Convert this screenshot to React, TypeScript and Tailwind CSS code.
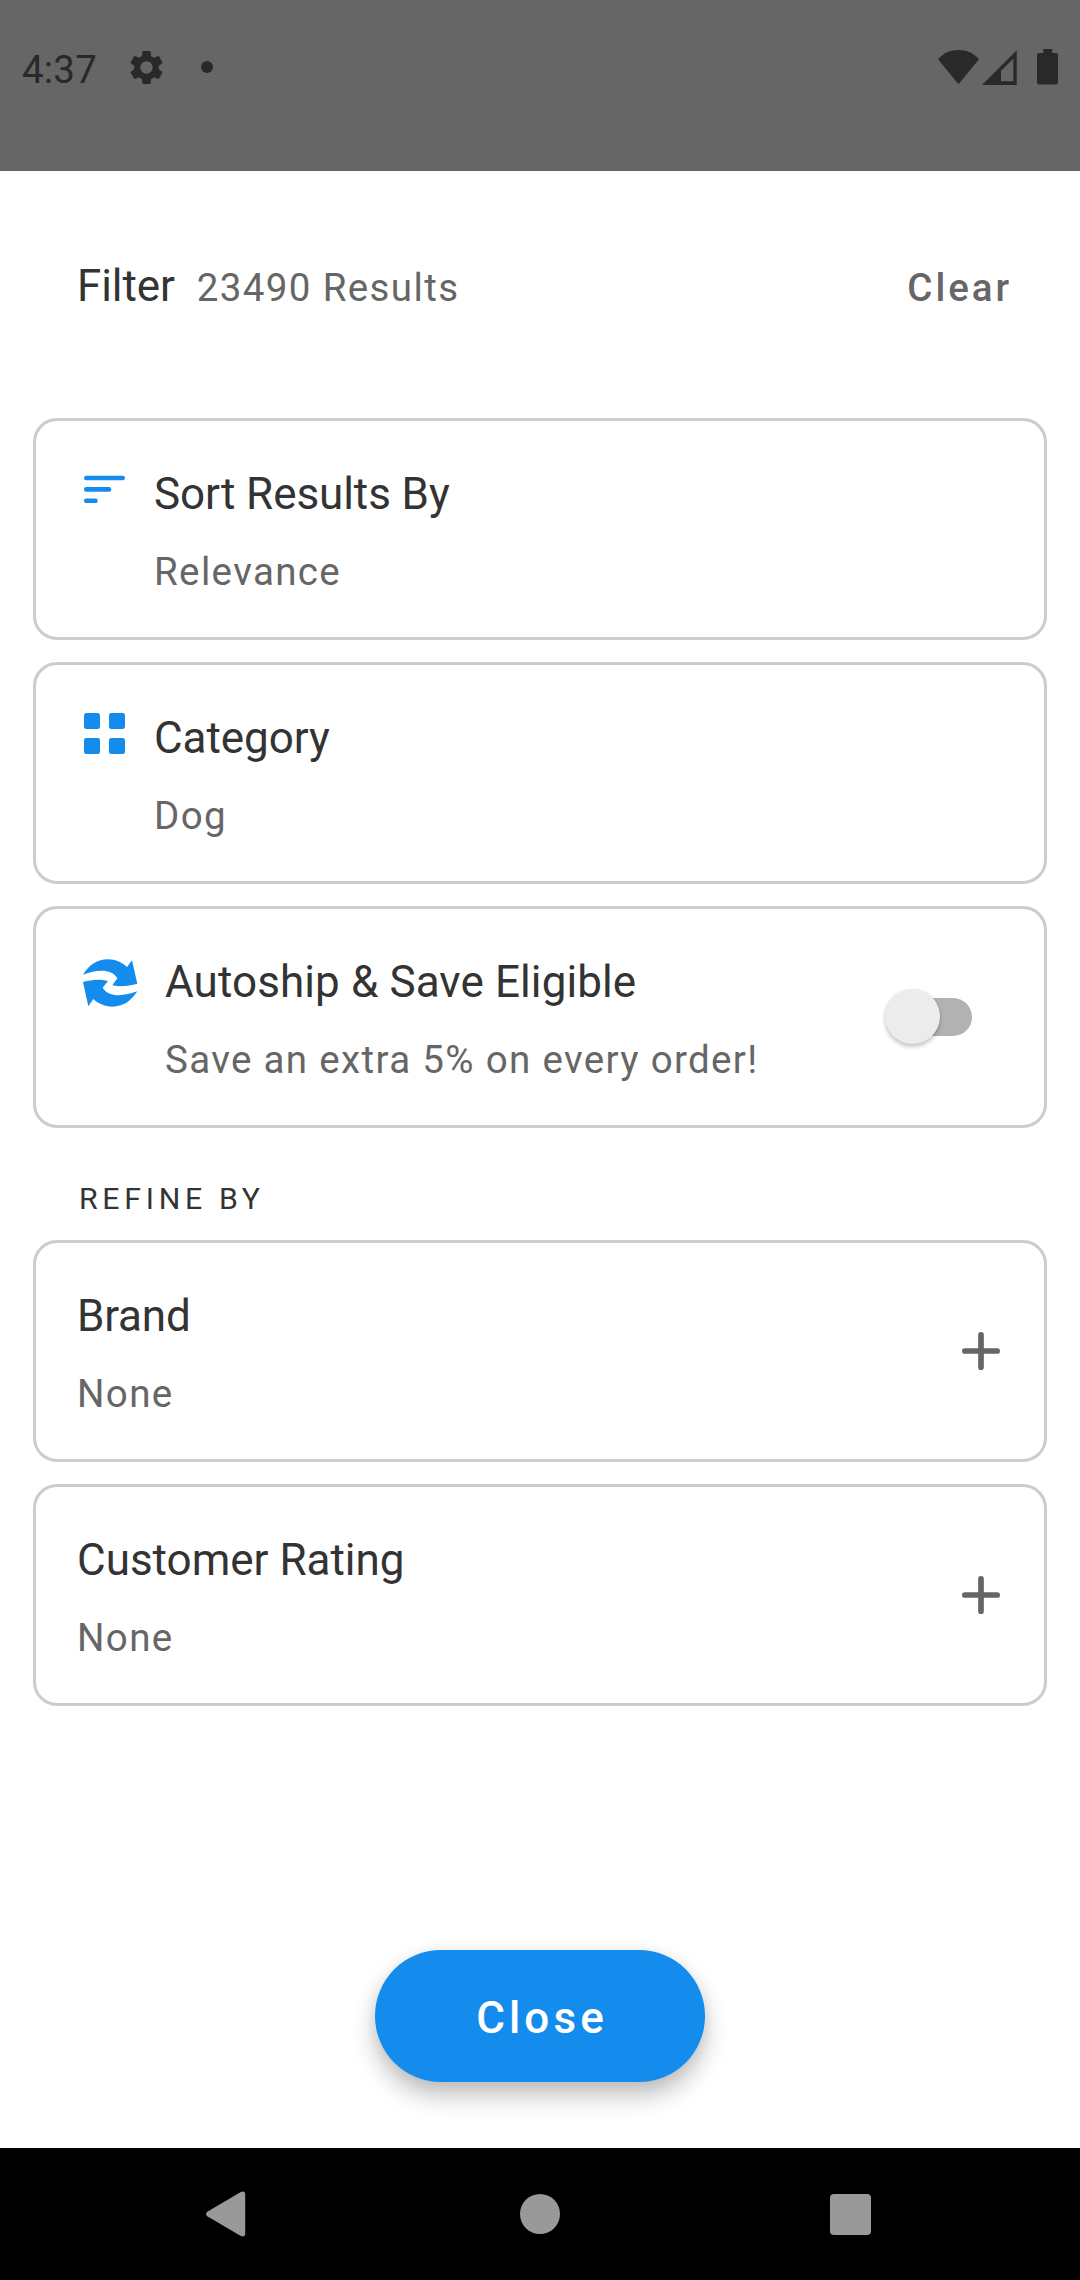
import React from 'react';
import { MdSettings } from 'react-icons/md';

function StatusBar() {
  return (
    <header className="flex h-[171px] items-start bg-[#666666] pt-[47px] pl-[22px] pr-[22px] text-[#292929]">
      <span className="w-[104px] text-[38.5px] leading-[45px] tracking-[0.2px]">4:37</span>
      <MdSettings className="h-[41px] w-[41px]" />
      <svg className="ml-[34px] h-[41px] w-3" viewBox="0 0 12 41">
        <circle cx="6" cy="20" r="6" fill="currentColor" />
      </svg>
      <div className="ml-auto flex">
        <svg className="h-[41px] w-[41px]" viewBox="0 0 41 41" fill="currentColor">
          <path d="M0 12.3C5.5 6 12.5 3 20.5 3S35.500 6 41 12.300L20.500 37.200Z" />
        </svg>
        <svg className="ml-[3px] h-[41px] w-[35px]" viewBox="0 0 35 41" fill="currentColor">
          <path fillRule="evenodd" d="M0 38L34.700 3.300V38ZM19 23.800V34.200H31.300V11.800Z" />
        </svg>
        <svg className="ml-5 h-[41px] w-[21px]" viewBox="0 0 21 41" fill="currentColor">
          <path d="M6.300 2H15.200V6H19a2 2 0 0 1 2 2V35.500a2 2 0 0 1-2 2H2a2 2 0 0 1-2-2V8a2 2 0 0 1 2-2H6.300Z" />
        </svg>
      </div>
    </header>
  );
}

function SortIcon() {
  return (
    <svg className="mr-[22px] h-[52px] w-[55px] shrink-0" viewBox="0 0 55 52" fill="#148cee">
      <rect x="7" y="7.700" width="41" height="4.600" rx="2.200" />
      <rect x="7" y="19.100" width="27.300" height="4.600" rx="2.200" />
      <rect x="7" y="30.500" width="13.700" height="4.600" rx="2.200" />
    </svg>
  );
}

function CategoryIcon() {
  return (
    <svg className="mr-[22px] h-[52px] w-[55px] shrink-0" viewBox="0 0 55 52" fill="#148cee">
      <rect x="7" y="1" width="16" height="16" rx="2.300" />
      <rect x="32" y="1" width="16" height="16" rx="2.300" />
      <rect x="7" y="26" width="16" height="16" rx="2.300" />
      <rect x="32" y="26" width="16" height="16" rx="2.300" />
    </svg>
  );
}

function AutoshipIcon() {
  return (
    <svg className="mr-[22px] h-[52px] w-[66px] shrink-0" viewBox="171 168 198 156" fill="#148cee">
      <path d="M189 224C208 194 232 178 264 178C286 178 306 187 321 201L336 181L352 251C328 258 302 261 277 256L292 235C275 206 232 208 189 224Z" />
      <path d="M352 274C333 304 309 320 277 320C255 320 235 311 220 297L205 319L189 246C213 239 239 236 264 243L248 263C266 292 309 290 352 274Z" />
    </svg>
  );
}

function PlusIcon() {
  return (
    <svg className="h-[38px] w-[38px]" viewBox="0 0 38 38" stroke="#666666" strokeWidth="5.700" strokeLinecap="round">
      <path d="M19 2.850V35.150M2.850 19H35.150" />
    </svg>
  );
}

function Switch() {
  return (
    <div className="relative h-[38px] w-[80px] rounded-full bg-[#b2b2b2]">
      <div className="absolute -top-[9px] -left-[7px] h-[55px] w-[55px] rounded-full bg-[#ececec] shadow-[0_3px_4px_rgba(0,0,0,0.22),0_0_3px_rgba(0,0,0,0.06)]" />
    </div>
  );
}

type CardProps = {
  title: string;
  subtitle: string;
  icon?: React.ReactNode;
  action?: React.ReactNode;
  titleClass?: string;
  subtitleClass?: string;
};

function Card({ title, subtitle, icon, action, titleClass = '', subtitleClass = 'tracking-[1.37px]' }: CardProps) {
  return (
    <section className="flex h-[222px] items-start rounded-[24px] border-[3px] border-[#cccccc] pt-[47px] pl-[41px]">
      {icon}
      <div className="flex flex-col gap-[29px] whitespace-nowrap">
        <h2 className={`text-[44px] leading-[52px] text-[#333333] ${titleClass}`}>{title}</h2>
        <p className={`text-[38.5px] leading-[45px] text-[#666666] ${subtitleClass}`}>{subtitle}</p>
      </div>
      {action}
    </section>
  );
}

function NavBar() {
  return (
    <nav className="flex h-[132px] items-center bg-black pl-[206px] text-[#999999]">
      <svg className="h-[46px] w-10" viewBox="0 0 40 46" fill="currentColor">
        <path d="M1.300 20.700L34.800 1Q39.200 -0.500 39.200 3.500V42.500Q39.200 46.500 34.800 45L1.300 25.300Q-1.300 23 1.300 20.700Z" />
      </svg>
      <div className="ml-[274px] h-10 w-10 rounded-full bg-[#999999]" />
      <div className="ml-[270px] h-[41px] w-[41px] rounded-[4px] bg-[#999999]" />
    </nav>
  );
}

export default function App() {
  return (
    <div className="flex h-[2280px] w-[1080px] flex-col overflow-hidden bg-white font-[Roboto,sans-serif]">
      <StatusBar />
      <main className="flex grow flex-col px-[33px] pt-[89px]">
        <div className="mb-[106px] flex items-baseline pl-11 pr-[35px]">
          <h1 className="text-[44px] leading-[52px] tracking-[-0.1px] text-[#333333]">Filter</h1>
          <span className="ml-[22px] text-[38.5px] leading-[45px] tracking-[1.37px] text-[#666666]">23490 Results</span>
          <button className="ml-auto text-[38.5px] leading-[45px] font-medium tracking-[2.95px] text-[#666666]">Clear</button>
        </div>
        <div className="flex flex-col gap-[22px]">
          <Card title="Sort Results By" subtitle="Relevance" icon={<SortIcon />} titleClass="tracking-[-0.08px]" />
          <Card title="Category" subtitle="Dog" icon={<CategoryIcon />} titleClass="tracking-[-0.05px]" />
          <Card
            title="Autoship & Save Eligible"
            subtitle="Save an extra 5% on every order!"
            icon={<AutoshipIcon />}
            titleClass="tracking-[0.1px]"
            subtitleClass="tracking-[1.34px]"
            action={<div className="mt-[42px] mr-[72px] ml-auto"><Switch /></div>}
          />
        </div>
        <h3 className="mt-[53px] mb-6 pl-[46px] text-[30.25px] leading-[35px] tracking-[4.72px] text-[#333333]">REFINE BY</h3>
        <div className="flex flex-col gap-[22px]">
          <Card title="Brand" subtitle="None" titleClass="tracking-[-0.2px]" action={<div className="mt-[42px] mr-11 ml-auto"><PlusIcon /></div>} />
          <Card title="Customer Rating" subtitle="None" action={<div className="mt-[42px] mr-11 ml-auto"><PlusIcon /></div>} />
        </div>
        <button className="mt-auto mb-[66px] h-[132px] w-[330px] self-center rounded-full bg-[#148cee] pt-1 pl-1 text-[44px] leading-[52px] font-medium tracking-[4.12px] text-white shadow-[0_14px_24px_rgba(0,0,0,0.24),0_2px_14px_rgba(0,0,0,0.07)]">
          Close
        </button>
      </main>
      <NavBar />
    </div>
  );
}
